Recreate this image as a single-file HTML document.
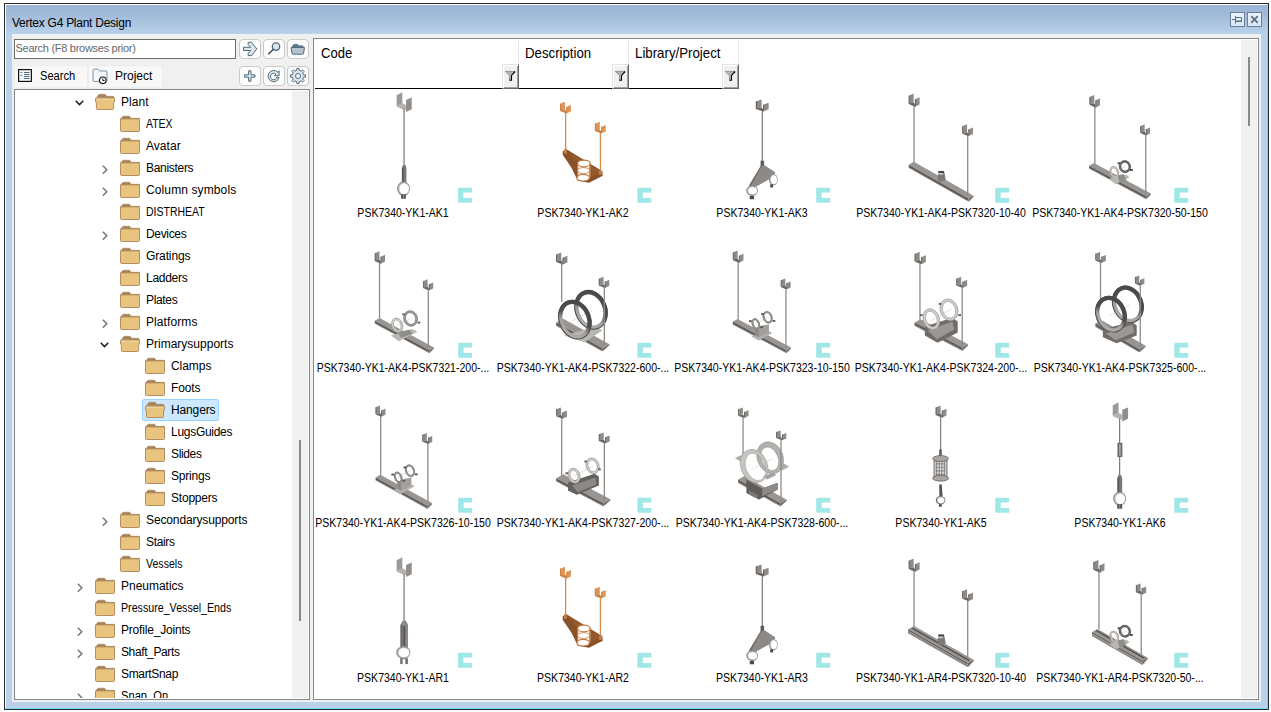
<!DOCTYPE html>
<html lang="en"><head><meta charset="utf-8"><title>Vertex G4 Plant Design</title>
<style>
*{box-sizing:border-box;margin:0;padding:0}
html,body{width:1271px;height:712px;background:#fff;overflow:hidden}
body{position:relative;font-family:"Liberation Sans",sans-serif;font-size:12px;color:#000}
.abs{position:absolute}
#win{left:4px;top:3px;width:1265px;height:707px;background:#b9d1ea;border:1px solid #2b2b2b;}
#winhi{left:5px;top:4px;width:1263px;height:705px;border:1px solid #fff;border-right-color:#6fdcf5;border-bottom-color:#6fdcf5}
#title{left:6px;top:5px;width:1261px;height:29px;background:linear-gradient(#9bb6d6 0%,#9fbad9 30%,#b9d1ea 100%)}
#ttext{left:12px;top:16px;font-size:12px;line-height:14px;white-space:nowrap;color:#000;letter-spacing:-0.1px}
#panel{left:12px;top:34px;width:1249px;height:668px;background:#f0f0f0}
.tbtn{top:12px;width:15px;height:15px;border:1px solid #6d7f93;background:linear-gradient(#e9f2fb,#d6e6f7)}
#search{left:14px;top:39px;width:222px;height:20px;background:#fff;border:1px solid #6b6b6b;}
#search span{position:absolute;left:0.5px;top:1.5px;font-size:11px;line-height:13px;color:#686868;white-space:nowrap}
.btn{width:22px;height:20px;background:#fdfdfd;border:1px solid #c9c9c9;border-radius:4px}
.btn svg{position:absolute;left:0;top:0}
.tab{top:65px;height:22px;background:#f8f8f8;border:1px solid #ececec;border-bottom:none}
.tab span{position:absolute;top:3px;font-size:12px;line-height:15px;white-space:nowrap}
#tree{left:14px;top:89px;width:296px;height:611px;background:#fff;border:1px solid #828790;overflow:hidden}
#tsb{left:292px;top:91px;width:16px;height:607px;background:#f0f0f0}
#tth{left:299px;top:440px;width:2px;height:181px;background:#8a8a8a}
.row{position:absolute;left:0;height:22px;white-space:nowrap}
.row .tx{position:absolute;top:4px;font-size:12px;line-height:15px;white-space:nowrap}
.sel{position:absolute;background:#cce8ff;border:1px solid #99d1ff;border-radius:2px}
#content{left:313px;top:38px;width:946px;height:662px;background:#fff;border:1px solid #828790;overflow:hidden}
#csb{left:1241px;top:40px;width:16px;height:658px;background:#f0f0f0}
#cth{left:1248px;top:57px;width:2px;height:69px;background:#8a8a8a}
.hd{top:44px;font-size:14.5px;line-height:18px;white-space:nowrap}
.hsep{top:40px;width:1px;height:48px;background:#e8e8e8}
.fbtn{top:64px;width:17px;height:25px;background:#f0f0f0;border:1px solid;border-color:#e3e3e3 #696969 #696969 #e3e3e3;box-shadow:inset 1px 1px 0 #fff,inset -1px -1px 0 #a0a0a0}
.lbl{position:absolute;font-size:12px;line-height:14px;white-space:nowrap;text-align:center;width:240px;transform:scaleX(0.877);transform-origin:50% 50%}
</style></head><body>
<div id="win" class="abs"></div><div id="winhi" class="abs"></div><div id="title" class="abs"></div>
<div id="ttext" class="abs fit" style="letter-spacing:-0.257px">Vertex G4 Plant Design</div>
<div class="abs tbtn" style="left:1230px"><svg width="13" height="13" viewBox="0 0 13 13" style="position:absolute;left:0;top:0"><path d="M1 6.5 H4.5" stroke="#5e6e7e" stroke-width="1" fill="none"/><path d="M4.5 3 V10.5" stroke="#5e6e7e" stroke-width="1" fill="none"/><path d="M4.5 4.5 H10.5 V8 H4.5" stroke="#5e6e7e" stroke-width="1" fill="none"/><path d="M4.5 8.5 H11" stroke="#5e6e7e" stroke-width="1" fill="none"/></svg></div><div class="abs tbtn" style="left:1247px"><svg width="13" height="13" viewBox="0 0 13 13" style="position:absolute;left:0;top:0"><path d="M3.3 3.2 L9.7 9.8 M9.7 3.2 L3.3 9.8" stroke="#5e6e7e" stroke-width="1.8" fill="none"/></svg></div>
<div id="panel" class="abs"></div>
<div id="search" class="abs"><span class="fit" style="letter-spacing:-0.282px">Search (F8 browses prior)</span></div>
<div class="abs btn" style="left:239px;top:39px"><svg width="20" height="18" viewBox="0 0 20 18" style="position:absolute;"><path d="M3.5 7.3 H10.6 L8.2 4.6 V2.3 H11.5 L16.8 8.9 L11.5 15.6 H8.2 V13.3 L10.6 10.5 H3.5Z" fill="#dde5ea" stroke="#4f6b7c" stroke-width="1" stroke-linejoin="miter"/></svg></div>
<div class="abs btn" style="left:239px;top:66px"><svg width="20" height="18" viewBox="0 0 20 18" style="position:absolute;"><path d="M8.6 3.8 H11 V7.8 H15 V10.2 H11 V14.2 H8.6 V10.2 H4.6 V7.8 H8.6Z" fill="#dde5ea" stroke="#4f6b7c" stroke-width="1"/></svg></div>
<div class="abs btn" style="left:263px;top:39px"><svg width="20" height="18" viewBox="0 0 20 18" style="position:absolute;"><circle cx="12" cy="6.6" r="3.7" fill="#dde5ea" stroke="#4f6b7c" stroke-width="1.3"/><path d="M9.4 9.2 L4.3 14.2" stroke="#3f4f5a" stroke-width="1.6" fill="none"/></svg></div>
<div class="abs btn" style="left:263px;top:66px"><svg width="20" height="18" viewBox="0 0 20 18" style="position:absolute;"><path transform="translate(0.5,0)" d="M13.2 5.2 A5.6 5.6 0 1 0 14.6 10.5 L12.2 10.2 A3.2 3.2 0 1 1 11.3 7.2 L9.8 8.7 H14.6 V3.8Z" fill="#dde5ea" stroke="#4f6b7c" stroke-width="1" stroke-linejoin="round"/></svg></div>
<div class="abs btn" style="left:287px;top:39px"><svg width="20" height="18" viewBox="0 0 20 18" style="position:absolute;"><path d="M4.5 6 L6 4.3 H9.5 L10.8 5.8 H15 V7 H4.5Z" fill="#60798a" stroke="#60798a" stroke-width="0.8"/><path d="M3 7.5 H16.5 L15.5 13.5 Q15.4 14.2 14.6 14.2 H4.9 Q4.1 14.2 4 13.5Z" fill="#b4c3cd" stroke="#4f6b7c" stroke-width="1"/></svg></div>
<div class="abs btn" style="left:287px;top:66px"><svg width="20" height="18" viewBox="0 0 20 18" style="position:absolute;"><path d="M8.86 1.49 L11.14 1.49 L11.19 3.43 L13.10 4.22 L14.51 2.88 L16.12 4.49 L14.78 5.90 L15.57 7.81 L17.51 7.86 L17.51 10.14 L15.57 10.19 L14.78 12.10 L16.12 13.51 L14.51 15.12 L13.10 13.78 L11.19 14.57 L11.14 16.51 L8.86 16.51 L8.81 14.57 L6.90 13.78 L5.49 15.12 L3.88 13.51 L5.22 12.10 L4.43 10.19 L2.49 10.14 L2.49 7.86 L4.43 7.81 L5.22 5.90 L3.88 4.49 L5.49 2.88 L6.90 4.22 L8.81 3.43Z" fill="#dde5ea" stroke="#4f6b7c" stroke-width="1" stroke-linejoin="round"/><circle cx="10" cy="9" r="2.5" fill="#fcfcfc" stroke="#4f6b7c" stroke-width="1"/></svg></div>
<div class="abs tab" style="left:14px;width:74px"><svg width="14" height="13" viewBox="0 0 14 13" style="position:absolute;left:3px;top:3px"><rect x="0.6" y="0.6" width="12.8" height="11.8" fill="#f4f6f8" stroke="#111" stroke-width="1.2"/><path d="M6 3.5 H11.5 M6 5.5 H11.5 M6 7.5 H11.5 M6 9.5 H11.5" stroke="#4f6b7c" stroke-width="1"/><path d="M2.5 3.5 H4.5 M2.5 6.5 H4.5" stroke="#6b8799" stroke-width="1"/></svg><span class="fit" style="left:25px;display:inline-block;transform-origin:0 50%;transform:scaleX(0.9256)">Search</span></div>
<div class="abs tab" style="left:88px;width:75px"><svg width="17" height="17" viewBox="0 0 17 17" style="position:absolute;left:3px;top:2px"><path d="M1 12.5 V2.5 Q1 1.2 2.2 1.2 H5.5 Q6.3 1.2 6.8 1.9 L7.6 3 H14 Q15 3 15 4 V12.5 Q15 13.4 14 13.4 H2 Q1 13.4 1 12.5Z" fill="#f3f5f7" stroke="#7f93a2" stroke-width="1"/><circle cx="10.8" cy="12.3" r="3.3" fill="#fff" stroke="#111" stroke-width="1.1"/><path d="M10.8 10.5 V12.5 H12.5" fill="none" stroke="#111" stroke-width="1"/></svg><span class="fit" style="left:26px;letter-spacing:-0.008px">Project</span></div>
<div id="tree" class="abs">
<div class="row" style="top:1px"><svg width="9" height="6" viewBox="0 0 9 6" style="position:absolute;left:60px;top:9px"><path d="M0.7 0.8 L4.5 4.6 L8.3 0.8" fill="none" stroke="#1e1e1e" stroke-width="1.5"/></svg><svg width="20" height="22" viewBox="0 0 20 22" style="position:absolute;left:80px;top:-1px"><path d="M1.5 7.5 L4 4.3 H10 L11.8 6.3 H18.5 L19.2 8 Z" fill="#a58357" stroke="#a58357" stroke-width="0.6"/><path d="M0.5 8.2 H19.5 L19.3 12 L18.6 13 V18.6 Q18.6 19.5 17.7 19.5 H2.3 Q1.4 19.5 1.4 18.6 V13 L0.7 12 Z" fill="#e9c47f" stroke="#b28e60" stroke-width="1"/><path d="M1.3 9.2 H18.7" stroke="#f6dea6" stroke-width="0.9" fill="none"/></svg><span class="tx" style="left:106px;letter-spacing:0.068px">Plant</span></div>
<div class="row" style="top:23px"><svg width="20" height="22" viewBox="0 0 20 22" style="position:absolute;left:105px;top:-1px"><path d="M0.5 6.8 L3.2 4.2 H9.5 L11.2 6.3 H19.5 V8 H0.5Z" fill="#a58357" stroke="#a58357" stroke-width="0.6"/><rect x="0.5" y="6.9" width="19" height="12.6" rx="1.2" fill="#e9c47f" stroke="#b28e60" stroke-width="1"/></svg><span class="tx" style="left:131px;display:inline-block;transform-origin:0 50%;transform:scaleX(0.8702)">ATEX</span></div>
<div class="row" style="top:45px"><svg width="20" height="22" viewBox="0 0 20 22" style="position:absolute;left:105px;top:-1px"><path d="M0.5 6.8 L3.2 4.2 H9.5 L11.2 6.3 H19.5 V8 H0.5Z" fill="#a58357" stroke="#a58357" stroke-width="0.6"/><rect x="0.5" y="6.9" width="19" height="12.6" rx="1.2" fill="#e9c47f" stroke="#b28e60" stroke-width="1"/></svg><span class="tx" style="left:131px;letter-spacing:0.039px">Avatar</span></div>
<div class="row" style="top:67px"><svg width="6" height="10" viewBox="0 0 6 10" style="position:absolute;left:87px;top:8px"><path d="M0.8 0.7 L4.8 4.7 L0.8 8.7" fill="none" stroke="#767676" stroke-width="1.5"/></svg><svg width="20" height="22" viewBox="0 0 20 22" style="position:absolute;left:105px;top:-1px"><path d="M0.5 6.8 L3.2 4.2 H9.5 L11.2 6.3 H19.5 V8 H0.5Z" fill="#a58357" stroke="#a58357" stroke-width="0.6"/><rect x="0.5" y="6.9" width="19" height="12.6" rx="1.2" fill="#e9c47f" stroke="#b28e60" stroke-width="1"/></svg><span class="tx" style="left:131px;letter-spacing:-0.303px">Banisters</span></div>
<div class="row" style="top:89px"><svg width="6" height="10" viewBox="0 0 6 10" style="position:absolute;left:87px;top:8px"><path d="M0.8 0.7 L4.8 4.7 L0.8 8.7" fill="none" stroke="#767676" stroke-width="1.5"/></svg><svg width="20" height="22" viewBox="0 0 20 22" style="position:absolute;left:105px;top:-1px"><path d="M0.5 6.8 L3.2 4.2 H9.5 L11.2 6.3 H19.5 V8 H0.5Z" fill="#a58357" stroke="#a58357" stroke-width="0.6"/><rect x="0.5" y="6.9" width="19" height="12.6" rx="1.2" fill="#e9c47f" stroke="#b28e60" stroke-width="1"/></svg><span class="tx" style="left:131px;letter-spacing:0.114px">Column symbols</span></div>
<div class="row" style="top:111px"><svg width="20" height="22" viewBox="0 0 20 22" style="position:absolute;left:105px;top:-1px"><path d="M0.5 6.8 L3.2 4.2 H9.5 L11.2 6.3 H19.5 V8 H0.5Z" fill="#a58357" stroke="#a58357" stroke-width="0.6"/><rect x="0.5" y="6.9" width="19" height="12.6" rx="1.2" fill="#e9c47f" stroke="#b28e60" stroke-width="1"/></svg><span class="tx" style="left:131px;display:inline-block;transform-origin:0 50%;transform:scaleX(0.8745)">DISTRHEAT</span></div>
<div class="row" style="top:133px"><svg width="6" height="10" viewBox="0 0 6 10" style="position:absolute;left:87px;top:8px"><path d="M0.8 0.7 L4.8 4.7 L0.8 8.7" fill="none" stroke="#767676" stroke-width="1.5"/></svg><svg width="20" height="22" viewBox="0 0 20 22" style="position:absolute;left:105px;top:-1px"><path d="M0.5 6.8 L3.2 4.2 H9.5 L11.2 6.3 H19.5 V8 H0.5Z" fill="#a58357" stroke="#a58357" stroke-width="0.6"/><rect x="0.5" y="6.9" width="19" height="12.6" rx="1.2" fill="#e9c47f" stroke="#b28e60" stroke-width="1"/></svg><span class="tx" style="left:131px;letter-spacing:-0.327px">Devices</span></div>
<div class="row" style="top:155px"><svg width="20" height="22" viewBox="0 0 20 22" style="position:absolute;left:105px;top:-1px"><path d="M0.5 6.8 L3.2 4.2 H9.5 L11.2 6.3 H19.5 V8 H0.5Z" fill="#a58357" stroke="#a58357" stroke-width="0.6"/><rect x="0.5" y="6.9" width="19" height="12.6" rx="1.2" fill="#e9c47f" stroke="#b28e60" stroke-width="1"/></svg><span class="tx" style="left:131px;letter-spacing:-0.120px">Gratings</span></div>
<div class="row" style="top:177px"><svg width="20" height="22" viewBox="0 0 20 22" style="position:absolute;left:105px;top:-1px"><path d="M0.5 6.8 L3.2 4.2 H9.5 L11.2 6.3 H19.5 V8 H0.5Z" fill="#a58357" stroke="#a58357" stroke-width="0.6"/><rect x="0.5" y="6.9" width="19" height="12.6" rx="1.2" fill="#e9c47f" stroke="#b28e60" stroke-width="1"/></svg><span class="tx" style="left:131px;letter-spacing:-0.282px">Ladders</span></div>
<div class="row" style="top:199px"><svg width="20" height="22" viewBox="0 0 20 22" style="position:absolute;left:105px;top:-1px"><path d="M0.5 6.8 L3.2 4.2 H9.5 L11.2 6.3 H19.5 V8 H0.5Z" fill="#a58357" stroke="#a58357" stroke-width="0.6"/><rect x="0.5" y="6.9" width="19" height="12.6" rx="1.2" fill="#e9c47f" stroke="#b28e60" stroke-width="1"/></svg><span class="tx" style="left:131px;letter-spacing:-0.343px">Plates</span></div>
<div class="row" style="top:221px"><svg width="6" height="10" viewBox="0 0 6 10" style="position:absolute;left:87px;top:8px"><path d="M0.8 0.7 L4.8 4.7 L0.8 8.7" fill="none" stroke="#767676" stroke-width="1.5"/></svg><svg width="20" height="22" viewBox="0 0 20 22" style="position:absolute;left:105px;top:-1px"><path d="M0.5 6.8 L3.2 4.2 H9.5 L11.2 6.3 H19.5 V8 H0.5Z" fill="#a58357" stroke="#a58357" stroke-width="0.6"/><rect x="0.5" y="6.9" width="19" height="12.6" rx="1.2" fill="#e9c47f" stroke="#b28e60" stroke-width="1"/></svg><span class="tx" style="left:131px;letter-spacing:0.090px">Platforms</span></div>
<div class="row" style="top:243px"><svg width="9" height="6" viewBox="0 0 9 6" style="position:absolute;left:85px;top:9px"><path d="M0.7 0.8 L4.5 4.6 L8.3 0.8" fill="none" stroke="#1e1e1e" stroke-width="1.5"/></svg><svg width="20" height="22" viewBox="0 0 20 22" style="position:absolute;left:105px;top:-1px"><path d="M1.5 7.5 L4 4.3 H10 L11.8 6.3 H18.5 L19.2 8 Z" fill="#a58357" stroke="#a58357" stroke-width="0.6"/><path d="M0.5 8.2 H19.5 L19.3 12 L18.6 13 V18.6 Q18.6 19.5 17.7 19.5 H2.3 Q1.4 19.5 1.4 18.6 V13 L0.7 12 Z" fill="#e9c47f" stroke="#b28e60" stroke-width="1"/><path d="M1.3 9.2 H18.7" stroke="#f6dea6" stroke-width="0.9" fill="none"/></svg><span class="tx" style="left:131px;letter-spacing:0.003px">Primarysupports</span></div>
<div class="row" style="top:265px"><svg width="20" height="22" viewBox="0 0 20 22" style="position:absolute;left:130px;top:-1px"><path d="M0.5 6.8 L3.2 4.2 H9.5 L11.2 6.3 H19.5 V8 H0.5Z" fill="#a58357" stroke="#a58357" stroke-width="0.6"/><rect x="0.5" y="6.9" width="19" height="12.6" rx="1.2" fill="#e9c47f" stroke="#b28e60" stroke-width="1"/></svg><span class="tx" style="left:156px;letter-spacing:-0.048px">Clamps</span></div>
<div class="row" style="top:287px"><svg width="20" height="22" viewBox="0 0 20 22" style="position:absolute;left:130px;top:-1px"><path d="M0.5 6.8 L3.2 4.2 H9.5 L11.2 6.3 H19.5 V8 H0.5Z" fill="#a58357" stroke="#a58357" stroke-width="0.6"/><rect x="0.5" y="6.9" width="19" height="12.6" rx="1.2" fill="#e9c47f" stroke="#b28e60" stroke-width="1"/></svg><span class="tx" style="left:156px;letter-spacing:-0.143px">Foots</span></div>
<div class="row" style="top:309px"><div class="sel" style="left:127px;top:0px;width:77px;height:22px"></div><svg width="20" height="22" viewBox="0 0 20 22" style="position:absolute;left:130px;top:-1px"><path d="M1.5 7.5 L4 4.3 H10 L11.8 6.3 H18.5 L19.2 8 Z" fill="#a58357" stroke="#a58357" stroke-width="0.6"/><path d="M0.5 8.2 H19.5 L19.3 12 L18.6 13 V18.6 Q18.6 19.5 17.7 19.5 H2.3 Q1.4 19.5 1.4 18.6 V13 L0.7 12 Z" fill="#e9c47f" stroke="#b28e60" stroke-width="1"/><path d="M1.3 9.2 H18.7" stroke="#f6dea6" stroke-width="0.9" fill="none"/></svg><span class="tx" style="left:156px;letter-spacing:-0.137px">Hangers</span></div>
<div class="row" style="top:331px"><svg width="20" height="22" viewBox="0 0 20 22" style="position:absolute;left:130px;top:-1px"><path d="M0.5 6.8 L3.2 4.2 H9.5 L11.2 6.3 H19.5 V8 H0.5Z" fill="#a58357" stroke="#a58357" stroke-width="0.6"/><rect x="0.5" y="6.9" width="19" height="12.6" rx="1.2" fill="#e9c47f" stroke="#b28e60" stroke-width="1"/></svg><span class="tx" style="left:156px;letter-spacing:-0.285px">LugsGuides</span></div>
<div class="row" style="top:353px"><svg width="20" height="22" viewBox="0 0 20 22" style="position:absolute;left:130px;top:-1px"><path d="M0.5 6.8 L3.2 4.2 H9.5 L11.2 6.3 H19.5 V8 H0.5Z" fill="#a58357" stroke="#a58357" stroke-width="0.6"/><rect x="0.5" y="6.9" width="19" height="12.6" rx="1.2" fill="#e9c47f" stroke="#b28e60" stroke-width="1"/></svg><span class="tx" style="left:156px;letter-spacing:-0.348px">Slides</span></div>
<div class="row" style="top:375px"><svg width="20" height="22" viewBox="0 0 20 22" style="position:absolute;left:130px;top:-1px"><path d="M0.5 6.8 L3.2 4.2 H9.5 L11.2 6.3 H19.5 V8 H0.5Z" fill="#a58357" stroke="#a58357" stroke-width="0.6"/><rect x="0.5" y="6.9" width="19" height="12.6" rx="1.2" fill="#e9c47f" stroke="#b28e60" stroke-width="1"/></svg><span class="tx" style="left:156px;letter-spacing:-0.184px">Springs</span></div>
<div class="row" style="top:397px"><svg width="20" height="22" viewBox="0 0 20 22" style="position:absolute;left:130px;top:-1px"><path d="M0.5 6.8 L3.2 4.2 H9.5 L11.2 6.3 H19.5 V8 H0.5Z" fill="#a58357" stroke="#a58357" stroke-width="0.6"/><rect x="0.5" y="6.9" width="19" height="12.6" rx="1.2" fill="#e9c47f" stroke="#b28e60" stroke-width="1"/></svg><span class="tx" style="left:156px;letter-spacing:-0.204px">Stoppers</span></div>
<div class="row" style="top:419px"><svg width="6" height="10" viewBox="0 0 6 10" style="position:absolute;left:87px;top:8px"><path d="M0.8 0.7 L4.8 4.7 L0.8 8.7" fill="none" stroke="#767676" stroke-width="1.5"/></svg><svg width="20" height="22" viewBox="0 0 20 22" style="position:absolute;left:105px;top:-1px"><path d="M0.5 6.8 L3.2 4.2 H9.5 L11.2 6.3 H19.5 V8 H0.5Z" fill="#a58357" stroke="#a58357" stroke-width="0.6"/><rect x="0.5" y="6.9" width="19" height="12.6" rx="1.2" fill="#e9c47f" stroke="#b28e60" stroke-width="1"/></svg><span class="tx" style="left:131px;letter-spacing:-0.124px">Secondarysupports</span></div>
<div class="row" style="top:441px"><svg width="20" height="22" viewBox="0 0 20 22" style="position:absolute;left:105px;top:-1px"><path d="M0.5 6.8 L3.2 4.2 H9.5 L11.2 6.3 H19.5 V8 H0.5Z" fill="#a58357" stroke="#a58357" stroke-width="0.6"/><rect x="0.5" y="6.9" width="19" height="12.6" rx="1.2" fill="#e9c47f" stroke="#b28e60" stroke-width="1"/></svg><span class="tx" style="left:131px;letter-spacing:-0.348px">Stairs</span></div>
<div class="row" style="top:463px"><svg width="20" height="22" viewBox="0 0 20 22" style="position:absolute;left:105px;top:-1px"><path d="M0.5 6.8 L3.2 4.2 H9.5 L11.2 6.3 H19.5 V8 H0.5Z" fill="#a58357" stroke="#a58357" stroke-width="0.6"/><rect x="0.5" y="6.9" width="19" height="12.6" rx="1.2" fill="#e9c47f" stroke="#b28e60" stroke-width="1"/></svg><span class="tx" style="left:131px;display:inline-block;transform-origin:0 50%;transform:scaleX(0.8825)">Vessels</span></div>
<div class="row" style="top:485px"><svg width="6" height="10" viewBox="0 0 6 10" style="position:absolute;left:62px;top:8px"><path d="M0.8 0.7 L4.8 4.7 L0.8 8.7" fill="none" stroke="#767676" stroke-width="1.5"/></svg><svg width="20" height="22" viewBox="0 0 20 22" style="position:absolute;left:80px;top:-1px"><path d="M0.5 6.8 L3.2 4.2 H9.5 L11.2 6.3 H19.5 V8 H0.5Z" fill="#a58357" stroke="#a58357" stroke-width="0.6"/><rect x="0.5" y="6.9" width="19" height="12.6" rx="1.2" fill="#e9c47f" stroke="#b28e60" stroke-width="1"/></svg><span class="tx" style="left:106px;letter-spacing:-0.020px">Pneumatics</span></div>
<div class="row" style="top:507px"><svg width="20" height="22" viewBox="0 0 20 22" style="position:absolute;left:80px;top:-1px"><path d="M0.5 6.8 L3.2 4.2 H9.5 L11.2 6.3 H19.5 V8 H0.5Z" fill="#a58357" stroke="#a58357" stroke-width="0.6"/><rect x="0.5" y="6.9" width="19" height="12.6" rx="1.2" fill="#e9c47f" stroke="#b28e60" stroke-width="1"/></svg><span class="tx" style="left:106px;display:inline-block;transform-origin:0 50%;transform:scaleX(0.8890)">Pressure_Vessel_Ends</span></div>
<div class="row" style="top:529px"><svg width="6" height="10" viewBox="0 0 6 10" style="position:absolute;left:62px;top:8px"><path d="M0.8 0.7 L4.8 4.7 L0.8 8.7" fill="none" stroke="#767676" stroke-width="1.5"/></svg><svg width="20" height="22" viewBox="0 0 20 22" style="position:absolute;left:80px;top:-1px"><path d="M0.5 6.8 L3.2 4.2 H9.5 L11.2 6.3 H19.5 V8 H0.5Z" fill="#a58357" stroke="#a58357" stroke-width="0.6"/><rect x="0.5" y="6.9" width="19" height="12.6" rx="1.2" fill="#e9c47f" stroke="#b28e60" stroke-width="1"/></svg><span class="tx" style="left:106px;letter-spacing:-0.189px">Profile_Joints</span></div>
<div class="row" style="top:551px"><svg width="6" height="10" viewBox="0 0 6 10" style="position:absolute;left:62px;top:8px"><path d="M0.8 0.7 L4.8 4.7 L0.8 8.7" fill="none" stroke="#767676" stroke-width="1.5"/></svg><svg width="20" height="22" viewBox="0 0 20 22" style="position:absolute;left:80px;top:-1px"><path d="M0.5 6.8 L3.2 4.2 H9.5 L11.2 6.3 H19.5 V8 H0.5Z" fill="#a58357" stroke="#a58357" stroke-width="0.6"/><rect x="0.5" y="6.9" width="19" height="12.6" rx="1.2" fill="#e9c47f" stroke="#b28e60" stroke-width="1"/></svg><span class="tx" style="left:106px;letter-spacing:-0.382px">Shaft_Parts</span></div>
<div class="row" style="top:573px"><svg width="20" height="22" viewBox="0 0 20 22" style="position:absolute;left:80px;top:-1px"><path d="M0.5 6.8 L3.2 4.2 H9.5 L11.2 6.3 H19.5 V8 H0.5Z" fill="#a58357" stroke="#a58357" stroke-width="0.6"/><rect x="0.5" y="6.9" width="19" height="12.6" rx="1.2" fill="#e9c47f" stroke="#b28e60" stroke-width="1"/></svg><span class="tx" style="left:106px;letter-spacing:-0.337px">SmartSnap</span></div>
<div class="row" style="top:595px"><svg width="6" height="10" viewBox="0 0 6 10" style="position:absolute;left:62px;top:8px"><path d="M0.8 0.7 L4.8 4.7 L0.8 8.7" fill="none" stroke="#767676" stroke-width="1.5"/></svg><svg width="20" height="22" viewBox="0 0 20 22" style="position:absolute;left:80px;top:-1px"><path d="M0.5 6.8 L3.2 4.2 H9.5 L11.2 6.3 H19.5 V8 H0.5Z" fill="#a58357" stroke="#a58357" stroke-width="0.6"/><rect x="0.5" y="6.9" width="19" height="12.6" rx="1.2" fill="#e9c47f" stroke="#b28e60" stroke-width="1"/></svg><span class="tx" style="left:106px;display:inline-block;transform-origin:0 50%;transform:scaleX(0.9287)">Snap_On</span></div>
<div class="abs" style="left:0;top:608px;width:294px;height:1px;background:#fff"></div>
</div>
<div id="tsb" class="abs"></div><div id="tth" class="abs"></div>
<div id="content" class="abs"></div>
<div id="csb" class="abs"></div><div id="cth" class="abs"></div>
<div class="abs hd fit" style="left:321px;display:inline-block;transform-origin:0 50%;transform:scaleX(0.8999)">Code</div><div class="abs hd fit" style="left:525px;display:inline-block;transform-origin:0 50%;transform:scaleX(0.9127)">Description</div><div class="abs hd fit" style="left:635px;display:inline-block;transform-origin:0 50%;transform:scaleX(0.9146)">Library/Project</div>
<div class="abs hsep" style="left:518px"></div>
<div class="abs hsep" style="left:628px"></div>
<div class="abs hsep" style="left:738px"></div>
<div class="abs" style="left:315px;top:88px;width:424px;height:1px;background:#000"></div>
<div class="abs fbtn" style="left:502px"><svg width="17" height="25" viewBox="0 0 17 25" style="position:absolute;left:-1px;top:-1px"><path d="M3.2 7.4 H13 L9.5 11.3 V16 H7.5 V11.3Z" fill="#b4b4b4" stroke="none"/><path d="M13 7.4 H3.2 L7.5 11.6 V16" fill="none" stroke="#858585" stroke-width="0.8"/><path d="M13.2 7.5 L9.5 11.4 V16.3 H7.2" fill="none" stroke="#000" stroke-width="1.1"/></svg></div>
<div class="abs fbtn" style="left:612px"><svg width="17" height="25" viewBox="0 0 17 25" style="position:absolute;left:-1px;top:-1px"><path d="M3.2 7.4 H13 L9.5 11.3 V16 H7.5 V11.3Z" fill="#b4b4b4" stroke="none"/><path d="M13 7.4 H3.2 L7.5 11.6 V16" fill="none" stroke="#858585" stroke-width="0.8"/><path d="M13.2 7.5 L9.5 11.4 V16.3 H7.2" fill="none" stroke="#000" stroke-width="1.1"/></svg></div>
<div class="abs fbtn" style="left:722px"><svg width="17" height="25" viewBox="0 0 17 25" style="position:absolute;left:-1px;top:-1px"><path d="M3.2 7.4 H13 L9.5 11.3 V16 H7.5 V11.3Z" fill="#b4b4b4" stroke="none"/><path d="M13 7.4 H3.2 L7.5 11.6 V16" fill="none" stroke="#858585" stroke-width="0.8"/><path d="M13.2 7.5 L9.5 11.4 V16.3 H7.2" fill="none" stroke="#000" stroke-width="1.1"/></svg></div>
<svg width="926" height="610" viewBox="314 89 926 610" style="position:absolute;left:314px;top:89px;overflow:hidden">
<defs><linearGradient id="gDark" x1="0" y1="1" x2="1" y2="0"><stop offset="0" stop-color="#b4b2af"/><stop offset="0.36" stop-color="#a3a19e"/><stop offset="0.52" stop-color="#504e4c"/><stop offset="1" stop-color="#4a4846"/></linearGradient><linearGradient id="gMid" x1="0" y1="1" x2="1" y2="0"><stop offset="0" stop-color="#d2d0cd"/><stop offset="0.42" stop-color="#c4c2bf"/><stop offset="0.6" stop-color="#7e7b78"/><stop offset="1" stop-color="#777472"/></linearGradient><linearGradient id="gLight" x1="0" y1="1" x2="1" y2="0"><stop offset="0" stop-color="#e2e0de"/><stop offset="0.5" stop-color="#d0cecb"/><stop offset="0.7" stop-color="#a9a6a3"/><stop offset="1" stop-color="#a29f9c"/></linearGradient></defs>
<g transform="translate(340,88) scale(0.19656)">
<polygon points="286.46,94.1 317.029,76.59 335.971,87.92 335.971,110.58 324.19,110.58" fill="#b6b2af"/><polygon points="288,37.45 317.029,22 317.029,77.002 288,92.555" fill="#9e9a97"/><polygon points="335.971,61.037 365,48.78 365,107.49 335.971,122.631" fill="#928e8b"/><line x1="326" y1="105" x2="326" y2="400" stroke="#8a8683" stroke-width="7"/><polygon points="320,392 334,392 338,410 338,482 315,482 315,410" fill="#7b7876"/><rect x="315" y="405" width="9" height="77" fill="#5a5856"/><ellipse cx="323" cy="512" rx="33" ry="36" fill="#8f8d8a" stroke="none" stroke-width="0"/><ellipse cx="324" cy="512" rx="27.6" ry="30.6" fill="#cfcdca" stroke="none" stroke-width="0"/><ellipse cx="327" cy="513" rx="24" ry="27" fill="#fff" stroke="none" stroke-width="0"/><rect x="311" y="541" width="24" height="22" fill="#4c4a48"/><rect x="319" y="541" width="8" height="22" fill="#8a8885"/>
<path d="M606 508 h65 v24 h-43 v27 h43 v25 h-65 q-6 0 -6 -6 v-64 q0 -6 6 -6z" fill="#a0e7e7"/>
</g>
<g transform="translate(510,88) scale(0.19656)">
<polygon points="255,112 279.86,109.6 286.405,118 286.405,130 255,116.8" fill="#c98248"/><polygon points="255,79.84 279.86,70 279.86,110.38 255,113.2" fill="#de9455"/><polygon points="286.405,96.16 310,86.38 310,119.08 286.405,130" fill="#de9455"/><polygon points="255,79.84 258.85,78.4 258.85,112.9 255,113.2" fill="#c47a40"/><polygon points="286.405,96.16 290.2,94.6 290.2,128.2 286.405,130" fill="#c47a40"/><line x1="283" y1="128" x2="283" y2="325" stroke="#d48a4c" stroke-width="6.5"/><polygon points="432,214 456.86,211.6 463.405,220 463.405,232 432,218.8" fill="#c98248"/><polygon points="432,181.84 456.86,172 456.86,212.38 432,215.2" fill="#de9455"/><polygon points="463.405,198.16 487,188.38 487,221.08 463.405,232" fill="#de9455"/><polygon points="432,181.84 435.85,180.4 435.85,214.9 432,215.2" fill="#c47a40"/><polygon points="463.405,198.16 467.2,196.6 467.2,230.2 463.405,232" fill="#c47a40"/><polygon points="268,322 292,314 470,424 472,446 402,482 345,472 312,405 268,340" fill="#8a5028"/><polygon points="292,318 466,428 420,448 330,365" fill="#96592d"/><rect x="344" y="384" width="64" height="72" fill="#fff"/><ellipse cx="372" cy="456" rx="32" ry="17" fill="#fff" stroke="#c47a40" stroke-width="6"/><ellipse cx="376" cy="384" rx="32" ry="17" fill="#fff" stroke="#c47a40" stroke-width="6"/><ellipse cx="374" cy="420" rx="32" ry="15" fill="none" stroke="#c47a40" stroke-width="4"/><rect x="341" y="384" width="6" height="72" fill="#c47a40"/><rect x="403" y="384" width="6" height="72" fill="#c47a40"/><line x1="460" y1="230" x2="460" y2="432" stroke="#d48a4c" stroke-width="6.5"/><rect x="452" y="420" width="16" height="22" fill="#c47a40"/><rect x="274" y="312" width="16" height="22" fill="#c47a40"/>
<path d="M654 508 h65 v24 h-43 v27 h43 v25 h-65 q-6 0 -6 -6 v-64 q0 -6 6 -6z" fill="#a0e7e7"/>
</g>
<g transform="translate(690,88) scale(0.19656)">
<polygon points="335,101.4 364.38,98.92 372.115,107.6 372.115,120 335,106.36" fill="#6a6765"/><polygon points="335,68.168 364.38,58 364.38,99.726 335,102.64" fill="#8d8a87"/><polygon points="372.115,85.032 400,74.926 400,108.716 372.115,120" fill="#8d8a87"/><polygon points="335,68.168 339.55,66.68 339.55,102.33 335,102.64" fill="#5f5c5a"/><polygon points="372.115,85.032 376.6,83.42 376.6,118.14 372.115,120" fill="#5f5c5a"/><line x1="368" y1="115" x2="368" y2="378" stroke="#8a8683" stroke-width="7"/><rect x="359" y="370" width="18" height="32" fill="#5f5d5b"/><polygon points="360,397 380,393 433,428 427,452 335,502 300,497" fill="#8c8986"/><polygon points="360,397 366,396 310,498 300,497" fill="#6f6c6a"/><ellipse cx="424" cy="466" rx="22" ry="29" fill="#8f8d8a" stroke="none" stroke-width="0"/><ellipse cx="425" cy="466" rx="17.8" ry="24.8" fill="#cfcdca" stroke="none" stroke-width="0"/><ellipse cx="427" cy="467" rx="15" ry="22" fill="#fff" stroke="none" stroke-width="0"/><rect x="408" y="490" width="15" height="16" fill="#4c4a48"/><ellipse cx="316" cy="522" rx="30" ry="26" fill="#8f8d8a" stroke="none" stroke-width="0"/><ellipse cx="317" cy="522" rx="25.2" ry="21.2" fill="#cfcdca" stroke="none" stroke-width="0"/><ellipse cx="319" cy="523" rx="22" ry="18" fill="#fff" stroke="none" stroke-width="0"/><rect x="304" y="548" width="22" height="18" fill="#4c4a48"/>
<path d="M648 508 h65 v24 h-43 v27 h43 v25 h-65 q-6 0 -6 -6 v-64 q0 -6 6 -6z" fill="#a0e7e7"/>
</g>
<g transform="translate(860,88) scale(0.19656)">
<polygon points="248,75.6 272.86,72.88 279.405,82.4 279.405,96 248,81.04" fill="#6a6765"/><polygon points="248,39.152 272.86,28 272.86,73.764 248,76.96" fill="#8d8a87"/><polygon points="279.405,57.648 303,46.564 303,83.624 279.405,96" fill="#8d8a87"/><polygon points="248,39.152 251.85,37.52 251.85,76.62 248,76.96" fill="#5f5c5a"/><polygon points="279.405,57.648 283.2,55.88 283.2,93.96 279.405,96" fill="#5f5c5a"/><line x1="275" y1="92" x2="275" y2="378" stroke="#8d8986" stroke-width="6.5"/><polygon points="520,227 544.86,224.6 551.405,233 551.405,245 520,231.8" fill="#6a6765"/><polygon points="520,194.84 544.86,185 544.86,225.38 520,228.2" fill="#8d8a87"/><polygon points="551.405,211.16 575,201.38 575,234.08 551.405,245" fill="#8d8a87"/><polygon points="520,194.84 523.85,193.4 523.85,227.9 520,228.2" fill="#5f5c5a"/><polygon points="551.405,211.16 555.2,209.6 555.2,243.2 551.405,245" fill="#5f5c5a"/><polygon points="248,390 274,375.7 578,547.7 552,562" fill="#989592"/><polygon points="248,390 552,562 552,578 248,406" fill="#5c5957"/><polygon points="248,401.52 552,573.52 552,578 248,406" fill="#9c9996"/><polygon points="552,562 578,547.7 578,553.3 556,574.8 578,563.7 552,578" fill="#6f6c6a"/><polygon points="395,440 430,432 436,468 400,478" fill="#7b7876"/><rect x="398" y="422" width="30" height="12" fill="#4c4a48"/><rect x="404" y="434" width="18" height="8" fill="#c9c7c4"/><line x1="548" y1="243" x2="548" y2="545" stroke="#8d8986" stroke-width="6.5"/>
<path d="M694 508 h65 v24 h-43 v27 h43 v25 h-65 q-6 0 -6 -6 v-64 q0 -6 6 -6z" fill="#a0e7e7"/>
</g>
<g transform="translate(1040,88) scale(0.19656)">
<polygon points="252,80.5 275.956,77.9 282.263,87 282.263,100 252,85.7" fill="#6a6765"/><polygon points="252,45.66 275.956,35 275.956,78.745 252,81.8" fill="#8d8a87"/><polygon points="282.263,63.34 305,52.745 305,88.17 282.263,100" fill="#8d8a87"/><polygon points="252,45.66 255.71,44.1 255.71,81.475 252,81.8" fill="#5f5c5a"/><polygon points="282.263,63.34 285.92,61.65 285.92,98.05 282.263,100" fill="#5f5c5a"/><line x1="279" y1="96" x2="279" y2="388" stroke="#8d8986" stroke-width="6.5"/><polygon points="510,224.9 532.6,222.62 538.55,230.6 538.55,242 510,229.46" fill="#6a6765"/><polygon points="510,194.348 532.6,185 532.6,223.361 510,226.04" fill="#8d8a87"/><polygon points="538.55,209.852 560,200.561 560,231.626 538.55,242" fill="#8d8a87"/><polygon points="510,194.348 513.5,192.98 513.5,225.755 510,226.04" fill="#5f5c5a"/><polygon points="538.55,209.852 542,208.37 542,240.29 538.55,242" fill="#5f5c5a"/><polygon points="250,395 274,381.8 564,536.8 540,550" fill="#989592"/><polygon points="250,395 540,550 540,565 250,410" fill="#5c5957"/><polygon points="250,405.8 540,560.8 540,565 250,410" fill="#9c9996"/><polygon points="540,550 564,536.8 564,542.05 544,562 564,551.8 540,565" fill="#6f6c6a"/><ellipse cx="432" cy="400" rx="24.5" ry="26.5" fill="#fff" stroke="#6f6c6a" stroke-width="11" transform="rotate(-20 432 400)"/><ellipse cx="432" cy="400" rx="28.8" ry="30.8" fill="none" stroke="#4a4846" stroke-width="2.6" transform="rotate(-20 432 400)"/><ellipse cx="432" cy="400" rx="20.2" ry="22.2" fill="none" stroke="#4a4846" stroke-width="2.2" transform="rotate(-20 432 400)"/><rect x="395" y="378" width="12" height="10" fill="#4c4a48"/><rect x="458" y="412" width="14" height="10" fill="#4c4a48"/><line x1="385" y1="428" x2="440" y2="395" stroke="#b0b0b0" stroke-width="2"/><ellipse cx="378" cy="428" rx="18" ry="26" fill="none" stroke="#d2d0cd" stroke-width="10" transform="rotate(-20 378 428)"/><ellipse cx="378" cy="428" rx="21.8" ry="29.8" fill="none" stroke="#8a8784" stroke-width="2.6" transform="rotate(-20 378 428)"/><ellipse cx="378" cy="428" rx="14.2" ry="22.2" fill="none" stroke="#8a8784" stroke-width="2.2" transform="rotate(-20 378 428)"/><polygon points="350,462 440,440 455,455 385,490" fill="#b9b7b4"/><polygon points="395,445 425,438 440,470 405,480" fill="#8f8d8a"/><line x1="538" y1="240" x2="538" y2="535" stroke="#8d8986" stroke-width="6.5"/>
<path d="M689 508 h65 v24 h-43 v27 h43 v25 h-65 q-6 0 -6 -6 v-64 q0 -6 6 -6z" fill="#a0e7e7"/>
</g>
<g transform="translate(330,243) scale(0.19656)">
<polygon points="228,86.8 251.504,84.24 257.692,93.2 257.692,106 228,91.92" fill="#6a6765"/><polygon points="228,52.496 251.504,42 251.504,85.072 228,88.08" fill="#8d8a87"/><polygon points="257.692,69.904 280,59.472 280,94.352 257.692,106" fill="#8d8a87"/><polygon points="228,52.496 231.64,50.96 231.64,87.76 228,88.08" fill="#5f5c5a"/><polygon points="257.692,69.904 261.28,68.24 261.28,104.08 257.692,106" fill="#5f5c5a"/><line x1="252" y1="102" x2="252" y2="388" stroke="#8d8986" stroke-width="6.5"/><polygon points="473,224.9 496.504,222.62 502.692,230.6 502.692,242 473,229.46" fill="#6a6765"/><polygon points="473,194.348 496.504,185 496.504,223.361 473,226.04" fill="#8d8a87"/><polygon points="502.692,209.852 525,200.561 525,231.626 502.692,242" fill="#8d8a87"/><polygon points="473,194.348 476.64,192.98 476.64,225.755 473,226.04" fill="#5f5c5a"/><polygon points="502.692,209.852 506.28,208.37 506.28,240.29 502.692,242" fill="#5f5c5a"/><polygon points="228,395 252,381.8 529,531.8 505,545" fill="#989592"/><polygon points="228,395 505,545 505,560 228,410" fill="#5c5957"/><polygon points="228,405.8 505,555.8 505,560 228,410" fill="#9c9996"/><polygon points="505,545 529,531.8 529,537.05 509,557 529,546.8 505,560" fill="#6f6c6a"/><ellipse cx="410" cy="384" rx="30" ry="35" fill="#fff" stroke="#a29f9c" stroke-width="12" transform="rotate(-20 410 384)"/><ellipse cx="410" cy="384" rx="34.8" ry="39.8" fill="none" stroke="#6a6765" stroke-width="2.6" transform="rotate(-20 410 384)"/><ellipse cx="410" cy="384" rx="25.2" ry="30.2" fill="none" stroke="#6a6765" stroke-width="2.2" transform="rotate(-20 410 384)"/><rect x="368" y="358" width="14" height="10" fill="#6b6967"/><rect x="445" y="400" width="14" height="10" fill="#6b6967"/><line x1="345" y1="420" x2="420" y2="380" stroke="#b0b0b0" stroke-width="2"/><ellipse cx="342" cy="418" rx="23" ry="32" fill="none" stroke="#d2d0cd" stroke-width="12" transform="rotate(-20 342 418)"/><ellipse cx="342" cy="418" rx="27.8" ry="36.8" fill="none" stroke="#8a8784" stroke-width="2.6" transform="rotate(-20 342 418)"/><ellipse cx="342" cy="418" rx="18.2" ry="27.2" fill="none" stroke="#8a8784" stroke-width="2.2" transform="rotate(-20 342 418)"/><polygon points="310,470 420,438 445,452 350,500" fill="#b9b7b4"/><polygon points="345,455 405,440 420,462 362,482" fill="#8f8d8a"/><line x1="500" y1="240" x2="500" y2="528" stroke="#8d8986" stroke-width="6.5"/>
<path d="M658 508 h65 v24 h-43 v27 h43 v25 h-65 q-6 0 -6 -6 v-64 q0 -6 6 -6z" fill="#a0e7e7"/>
</g>
<g transform="translate(510,243) scale(0.19656)">
<polygon points="235,91.4 260.764,88.92 267.547,97.6 267.547,110 235,96.36" fill="#6a6765"/><polygon points="235,58.168 260.764,48 260.764,89.726 235,92.64" fill="#8d8a87"/><polygon points="267.547,75.032 292,64.926 292,98.716 267.547,110" fill="#8d8a87"/><polygon points="235,58.168 238.99,56.68 238.99,92.33 235,92.64" fill="#5f5c5a"/><polygon points="267.547,75.032 271.48,73.42 271.48,108.14 267.547,110" fill="#5f5c5a"/><line x1="263" y1="106" x2="263" y2="300" stroke="#8d8986" stroke-width="6.5"/><polygon points="452,211.9 475.956,209.62 482.263,217.6 482.263,229 452,216.46" fill="#6a6765"/><polygon points="452,181.348 475.956,172 475.956,210.361 452,213.04" fill="#8d8a87"/><polygon points="482.263,196.852 505,187.561 505,218.626 482.263,229" fill="#8d8a87"/><polygon points="452,181.348 455.71,179.98 455.71,212.755 452,213.04" fill="#5f5c5a"/><polygon points="482.263,196.852 485.92,195.37 485.92,227.29 482.263,229" fill="#5f5c5a"/><polygon points="235,405 271,385.2 506,515.2 470,535" fill="#989592"/><polygon points="235,405 470,535 470,551 235,421" fill="#5c5957"/><polygon points="235,416.52 470,546.52 470,551 235,421" fill="#9c9996"/><polygon points="470,535 506,515.2 506,520.8 474,547.8 506,531.2 470,551" fill="#6f6c6a"/><polygon points="275,470 440,425 470,445 380,505" fill="#b9b7b4"/><ellipse cx="412" cy="340" rx="71" ry="93" fill="#fff" stroke="url(#gDark)" stroke-width="22" transform="rotate(-22 412 340)"/><ellipse cx="412" cy="340" rx="79.5" ry="101.5" fill="none" stroke="#4a4846" stroke-width="5" transform="rotate(-22 412 340)"/><line x1="315" y1="395" x2="420" y2="345" stroke="#b0b0b0" stroke-width="2"/><ellipse cx="330" cy="390" rx="71" ry="93" fill="none" stroke="url(#gDark)" stroke-width="22" transform="rotate(-22 330 390)"/><ellipse cx="330" cy="390" rx="79.5" ry="101.5" fill="none" stroke="#4a4846" stroke-width="5" transform="rotate(-22 330 390)"/><line x1="480" y1="226" x2="480" y2="520" stroke="#8d8986" stroke-width="6.5"/>
<path d="M654 508 h65 v24 h-43 v27 h43 v25 h-65 q-6 0 -6 -6 v-64 q0 -6 6 -6z" fill="#a0e7e7"/>
</g>
<g transform="translate(690,243) scale(0.19656)">
<polygon points="218,82.1 242.408,79.58 248.834,88.4 248.834,101 218,87.14" fill="#6a6765"/><polygon points="218,48.332 242.408,38 242.408,80.399 218,83.36" fill="#8d8a87"/><polygon points="248.834,65.468 272,55.199 272,89.534 248.834,101" fill="#8d8a87"/><polygon points="218,48.332 221.78,46.82 221.78,83.045 218,83.36" fill="#5f5c5a"/><polygon points="248.834,65.468 252.56,63.83 252.56,99.11 248.834,101" fill="#5f5c5a"/><line x1="245" y1="98" x2="245" y2="390" stroke="#8d8986" stroke-width="6.5"/><polygon points="462,219.9 484.6,217.62 490.55,225.6 490.55,237 462,224.46" fill="#6a6765"/><polygon points="462,189.348 484.6,180 484.6,218.361 462,221.04" fill="#8d8a87"/><polygon points="490.55,204.852 512,195.561 512,226.626 490.55,237" fill="#8d8a87"/><polygon points="462,189.348 465.5,187.98 465.5,220.755 462,221.04" fill="#5f5c5a"/><polygon points="490.55,204.852 494,203.37 494,235.29 490.55,237" fill="#5f5c5a"/><polygon points="218,400 242,386.8 514,531.8 490,545" fill="#989592"/><polygon points="218,400 490,545 490,560 218,415" fill="#5c5957"/><polygon points="218,410.8 490,555.8 490,560 218,415" fill="#9c9996"/><polygon points="490,545 514,531.8 514,537.05 494,557 514,546.8 490,560" fill="#6f6c6a"/><polygon points="311,474 399,449 420,456 349,496" fill="#b3b0ad"/><polygon points="332,434 369,419 402,414 402,455 349,479 332,470" fill="#a29f9c"/><polygon points="332,434 349,442 349,479 332,470" fill="#8a8784"/><ellipse cx="395" cy="378" rx="19.5" ry="27.5" fill="#fff" stroke="#a29f9c" stroke-width="9" transform="rotate(-20 395 378)"/><ellipse cx="395" cy="378" rx="22.8" ry="30.8" fill="none" stroke="#6a6765" stroke-width="2.6" transform="rotate(-20 395 378)"/><ellipse cx="395" cy="378" rx="16.2" ry="24.2" fill="none" stroke="#6a6765" stroke-width="2.2" transform="rotate(-20 395 378)"/><rect x="362" y="357" width="14" height="9" fill="#55524f"/><rect x="420" y="392" width="14" height="9" fill="#55524f"/><line x1="338" y1="410" x2="395" y2="378" stroke="#b0b0b0" stroke-width="2"/><ellipse cx="335" cy="412" rx="15.5" ry="25.5" fill="none" stroke="#a29f9c" stroke-width="9" transform="rotate(-20 335 412)"/><ellipse cx="335" cy="412" rx="18.8" ry="28.8" fill="none" stroke="#6a6765" stroke-width="2.6" transform="rotate(-20 335 412)"/><ellipse cx="335" cy="412" rx="12.2" ry="22.2" fill="none" stroke="#6a6765" stroke-width="2.2" transform="rotate(-20 335 412)"/><rect x="300" y="393" width="14" height="9" fill="#55524f"/><rect x="357" y="424" width="14" height="9" fill="#55524f"/><line x1="488" y1="235" x2="488" y2="532" stroke="#8d8986" stroke-width="6.5"/>
<path d="M648 508 h65 v24 h-43 v27 h43 v25 h-65 q-6 0 -6 -6 v-64 q0 -6 6 -6z" fill="#a0e7e7"/>
</g>
<g transform="translate(860,243) scale(0.19656)">
<polygon points="278,89.1 303.764,86.58 310.547,95.4 310.547,108 278,94.14" fill="#6a6765"/><polygon points="278,55.332 303.764,45 303.764,87.399 278,90.36" fill="#8d8a87"/><polygon points="310.547,72.468 335,62.199 335,96.534 310.547,108" fill="#8d8a87"/><polygon points="278,55.332 281.99,53.82 281.99,90.045 278,90.36" fill="#5f5c5a"/><polygon points="310.547,72.468 314.48,70.83 314.48,106.11 310.547,108" fill="#5f5c5a"/><line x1="305" y1="104" x2="305" y2="392" stroke="#8d8986" stroke-width="6.5"/><polygon points="490,211.9 514.86,209.62 521.405,217.6 521.405,229 490,216.46" fill="#6a6765"/><polygon points="490,181.348 514.86,172 514.86,210.361 490,213.04" fill="#8d8a87"/><polygon points="521.405,196.852 545,187.561 545,218.626 521.405,229" fill="#8d8a87"/><polygon points="490,181.348 493.85,179.98 493.85,212.755 490,213.04" fill="#5f5c5a"/><polygon points="521.405,196.852 525.2,195.37 525.2,227.29 521.405,229" fill="#5f5c5a"/><polygon points="278,405 308,388.5 550,515.5 520,532" fill="#989592"/><polygon points="278,405 520,532 520,548 278,421" fill="#5c5957"/><polygon points="278,416.52 520,543.52 520,548 278,421" fill="#9c9996"/><polygon points="520,532 550,515.5 550,521.1 524,544.8 550,531.5 520,548" fill="#6f6c6a"/><polygon points="330,425 470,380 497,400 497,455 395,508 330,470" fill="#6f6c6a"/><polygon points="345,445 470,400 480,440 390,490" fill="#9a9794"/><ellipse cx="453" cy="340" rx="38.5" ry="49.5" fill="#fff" stroke="#d2d0cd" stroke-width="15" transform="rotate(-20 453 340)"/><ellipse cx="453" cy="340" rx="44.8" ry="55.8" fill="none" stroke="#8a8784" stroke-width="2.6" transform="rotate(-20 453 340)"/><ellipse cx="453" cy="340" rx="32.2" ry="43.2" fill="none" stroke="#8a8784" stroke-width="2.2" transform="rotate(-20 453 340)"/><rect x="400" y="305" width="14" height="10" fill="#6b6967"/><rect x="500" y="362" width="14" height="10" fill="#6b6967"/><line x1="360" y1="395" x2="465" y2="335" stroke="#b0b0b0" stroke-width="2"/><ellipse cx="363" cy="387" rx="34.5" ry="47.5" fill="none" stroke="#d2d0cd" stroke-width="15" transform="rotate(-20 363 387)"/><ellipse cx="363" cy="387" rx="40.8" ry="53.8" fill="none" stroke="#8a8784" stroke-width="2.6" transform="rotate(-20 363 387)"/><ellipse cx="363" cy="387" rx="28.2" ry="41.2" fill="none" stroke="#8a8784" stroke-width="2.2" transform="rotate(-20 363 387)"/><rect x="305" y="362" width="14" height="10" fill="#6b6967"/><line x1="520" y1="226" x2="520" y2="528" stroke="#8d8986" stroke-width="6.5"/>
<path d="M694 508 h65 v24 h-43 v27 h43 v25 h-65 q-6 0 -6 -6 v-64 q0 -6 6 -6z" fill="#a0e7e7"/>
</g>
<g transform="translate(1040,243) scale(0.19656)">
<polygon points="282,84.9 305.956,82.62 312.263,90.6 312.263,102 282,89.46" fill="#6a6765"/><polygon points="282,54.348 305.956,45 305.956,83.361 282,86.04" fill="#8d8a87"/><polygon points="312.263,69.852 335,60.561 335,91.626 312.263,102" fill="#8d8a87"/><polygon points="282,54.348 285.71,52.98 285.71,85.755 282,86.04" fill="#5f5c5a"/><polygon points="312.263,69.852 315.92,68.37 315.92,100.29 312.263,102" fill="#5f5c5a"/><line x1="308" y1="98" x2="308" y2="300" stroke="#8d8986" stroke-width="6.5"/><polygon points="483,201.4 504.696,199.32 510.408,206.6 510.408,217 483,205.56" fill="#6a6765"/><polygon points="483,173.528 504.696,165 504.696,199.996 483,202.44" fill="#8d8a87"/><polygon points="510.408,187.672 531,179.196 531,207.536 510.408,217" fill="#8d8a87"/><polygon points="483,173.528 486.36,172.28 486.36,202.18 483,202.44" fill="#5f5c5a"/><polygon points="510.408,187.672 513.72,186.32 513.72,215.44 510.408,217" fill="#5f5c5a"/><polygon points="282,410 314,392.4 537,522.4 505,540" fill="#989592"/><polygon points="282,410 505,540 505,556 282,426" fill="#5c5957"/><polygon points="282,421.52 505,551.52 505,556 282,426" fill="#9c9996"/><polygon points="505,540 537,522.4 537,528 509,552.8 537,538.4 505,556" fill="#6f6c6a"/><polygon points="320,440 465,400 492,420 492,470 390,510 320,480" fill="#6f6c6a"/><polygon points="335,460 470,415 480,455 385,495" fill="#9a9794"/><ellipse cx="447" cy="312" rx="67" ry="87" fill="#fff" stroke="url(#gDark)" stroke-width="22" transform="rotate(-22 447 312)"/><ellipse cx="447" cy="312" rx="75.5" ry="95.5" fill="none" stroke="#4a4846" stroke-width="5" transform="rotate(-22 447 312)"/><line x1="355" y1="370" x2="460" y2="315" stroke="#b0b0b0" stroke-width="2"/><ellipse cx="361" cy="362" rx="67" ry="85" fill="none" stroke="url(#gDark)" stroke-width="22" transform="rotate(-22 361 362)"/><ellipse cx="361" cy="362" rx="75.5" ry="93.5" fill="none" stroke="#4a4846" stroke-width="5" transform="rotate(-22 361 362)"/><line x1="510" y1="213" x2="510" y2="528" stroke="#8d8986" stroke-width="6.5"/>
<path d="M689 508 h65 v24 h-43 v27 h43 v25 h-65 q-6 0 -6 -6 v-64 q0 -6 6 -6z" fill="#a0e7e7"/>
</g>
<g transform="translate(330,398) scale(0.19656)">
<polygon points="232,78.6 254.6,76.28 260.55,84.4 260.55,96 232,83.24" fill="#6a6765"/><polygon points="232,47.512 254.6,38 254.6,77.034 232,79.76" fill="#8d8a87"/><polygon points="260.55,63.288 282,53.834 282,85.444 260.55,96" fill="#8d8a87"/><polygon points="232,47.512 235.5,46.12 235.5,79.47 232,79.76" fill="#5f5c5a"/><polygon points="260.55,63.288 264,61.78 264,94.26 260.55,96" fill="#5f5c5a"/><line x1="258" y1="92" x2="258" y2="395" stroke="#8d8986" stroke-width="6.5"/><polygon points="470,217.2 492.6,214.96 498.55,222.8 498.55,234 470,221.68" fill="#6a6765"/><polygon points="470,187.184 492.6,178 492.6,215.688 470,218.32" fill="#8d8a87"/><polygon points="498.55,202.416 520,193.288 520,223.808 498.55,234" fill="#8d8a87"/><polygon points="470,187.184 473.5,185.84 473.5,218.04 470,218.32" fill="#5f5c5a"/><polygon points="498.55,202.416 502,200.96 502,232.32 498.55,234" fill="#5f5c5a"/><polygon points="232,404 256,390.8 519,534.8 495,548" fill="#989592"/><polygon points="232,404 495,548 495,563 232,419" fill="#5c5957"/><polygon points="232,414.8 495,558.8 495,563 232,419" fill="#9c9996"/><polygon points="495,548 519,534.8 519,540.05 499,560 519,549.8 495,563" fill="#6f6c6a"/><polygon points="323,466 411,441 432,448 361,488" fill="#b3b0ad"/><polygon points="344,426 381,411 414,406 414,447 361,471 344,462" fill="#a29f9c"/><polygon points="344,426 361,434 361,471 344,462" fill="#8a8784"/><ellipse cx="407" cy="370" rx="19.5" ry="27.5" fill="#fff" stroke="#a29f9c" stroke-width="9" transform="rotate(-20 407 370)"/><ellipse cx="407" cy="370" rx="22.8" ry="30.8" fill="none" stroke="#6a6765" stroke-width="2.6" transform="rotate(-20 407 370)"/><ellipse cx="407" cy="370" rx="16.2" ry="24.2" fill="none" stroke="#6a6765" stroke-width="2.2" transform="rotate(-20 407 370)"/><rect x="374" y="349" width="14" height="9" fill="#55524f"/><rect x="432" y="384" width="14" height="9" fill="#55524f"/><line x1="350" y1="402" x2="407" y2="370" stroke="#b0b0b0" stroke-width="2"/><ellipse cx="347" cy="404" rx="15.5" ry="25.5" fill="none" stroke="#a29f9c" stroke-width="9" transform="rotate(-20 347 404)"/><ellipse cx="347" cy="404" rx="18.8" ry="28.8" fill="none" stroke="#6a6765" stroke-width="2.6" transform="rotate(-20 347 404)"/><ellipse cx="347" cy="404" rx="12.2" ry="22.2" fill="none" stroke="#6a6765" stroke-width="2.2" transform="rotate(-20 347 404)"/><rect x="312" y="385" width="14" height="9" fill="#55524f"/><rect x="369" y="416" width="14" height="9" fill="#55524f"/><line x1="498" y1="232" x2="498" y2="532" stroke="#8d8986" stroke-width="6.5"/>
<path d="M658 508 h65 v24 h-43 v27 h43 v25 h-65 q-6 0 -6 -6 v-64 q0 -6 6 -6z" fill="#a0e7e7"/>
</g>
<g transform="translate(510,398) scale(0.19656)">
<polygon points="235,88.6 259.86,86.28 266.405,94.4 266.405,106 235,93.24" fill="#6a6765"/><polygon points="235,57.512 259.86,48 259.86,87.034 235,89.76" fill="#8d8a87"/><polygon points="266.405,73.288 290,63.834 290,95.444 266.405,106" fill="#8d8a87"/><polygon points="235,57.512 238.85,56.12 238.85,89.47 235,89.76" fill="#5f5c5a"/><polygon points="266.405,73.288 270.2,71.78 270.2,104.26 266.405,106" fill="#5f5c5a"/><line x1="263" y1="102" x2="263" y2="398" stroke="#8d8986" stroke-width="6.5"/><polygon points="452,214.2 476.86,211.96 483.405,219.8 483.405,231 452,218.68" fill="#6a6765"/><polygon points="452,184.184 476.86,175 476.86,212.688 452,215.32" fill="#8d8a87"/><polygon points="483.405,199.416 507,190.288 507,220.808 483.405,231" fill="#8d8a87"/><polygon points="452,184.184 455.85,182.84 455.85,215.04 452,215.32" fill="#5f5c5a"/><polygon points="483.405,199.416 487.2,197.96 487.2,229.32 483.405,231" fill="#5f5c5a"/><polygon points="235,408 271,388.2 511,515.2 475,535" fill="#989592"/><polygon points="235,408 475,535 475,551 235,424" fill="#5c5957"/><polygon points="235,419.52 475,546.52 475,551 235,424" fill="#9c9996"/><polygon points="475,535 511,515.2 511,520.8 479,547.8 511,531.2 475,551" fill="#6f6c6a"/><polygon points="295,430 430,385 452,400 452,445 340,492 295,470" fill="#64615f"/><polygon points="315,445 435,405 440,440 345,480" fill="#8c8986"/><ellipse cx="420" cy="345" rx="27.5" ry="35.5" fill="#fff" stroke="#d2d0cd" stroke-width="13" transform="rotate(-20 420 345)"/><ellipse cx="420" cy="345" rx="32.8" ry="40.8" fill="none" stroke="#8a8784" stroke-width="2.6" transform="rotate(-20 420 345)"/><ellipse cx="420" cy="345" rx="22.2" ry="30.2" fill="none" stroke="#8a8784" stroke-width="2.2" transform="rotate(-20 420 345)"/><rect x="378" y="318" width="14" height="10" fill="#6b6967"/><rect x="448" y="358" width="14" height="10" fill="#6b6967"/><line x1="330" y1="395" x2="425" y2="345" stroke="#b0b0b0" stroke-width="2"/><ellipse cx="326" cy="395" rx="24.5" ry="33.5" fill="none" stroke="#d2d0cd" stroke-width="13" transform="rotate(-20 326 395)"/><ellipse cx="326" cy="395" rx="29.8" ry="38.8" fill="none" stroke="#8a8784" stroke-width="2.6" transform="rotate(-20 326 395)"/><ellipse cx="326" cy="395" rx="19.2" ry="28.2" fill="none" stroke="#8a8784" stroke-width="2.2" transform="rotate(-20 326 395)"/><rect x="282" y="378" width="14" height="10" fill="#6b6967"/><line x1="480" y1="228" x2="480" y2="522" stroke="#8d8986" stroke-width="6.5"/>
<path d="M654 508 h65 v24 h-43 v27 h43 v25 h-65 q-6 0 -6 -6 v-64 q0 -6 6 -6z" fill="#a0e7e7"/>
</g>
<g transform="translate(690,398) scale(0.19656)">
<polygon points="245,85.8 268.956,83.64 275.263,91.2 275.263,102 245,90.12" fill="#6a6765"/><polygon points="245,56.856 268.956,48 268.956,84.342 245,86.88" fill="#8d8a87"/><polygon points="275.263,71.544 298,62.742 298,92.172 275.263,102" fill="#8d8a87"/><polygon points="245,56.856 248.71,55.56 248.71,86.61 245,86.88" fill="#5f5c5a"/><polygon points="275.263,71.544 278.92,70.14 278.92,100.38 275.263,102" fill="#5f5c5a"/><line x1="270" y1="98" x2="270" y2="300" stroke="#8d8986" stroke-width="6.5"/><polygon points="438,200 461.504,198 467.692,205 467.692,215 438,204" fill="#6a6765"/><polygon points="438,173.2 461.504,165 461.504,198.65 438,201" fill="#8d8a87"/><polygon points="467.692,186.8 490,178.65 490,205.9 467.692,215" fill="#8d8a87"/><polygon points="438,173.2 441.64,172 441.64,200.75 438,201" fill="#5f5c5a"/><polygon points="467.692,186.8 471.28,185.5 471.28,213.5 467.692,215" fill="#5f5c5a"/><polygon points="245,415 277,397.4 492,517.4 460,535" fill="#989592"/><polygon points="245,415 460,535 460,551 245,431" fill="#5c5957"/><polygon points="245,426.52 460,546.52 460,551 245,431" fill="#9c9996"/><polygon points="460,535 492,517.4 492,523 464,547.8 492,533.4 460,551" fill="#6f6c6a"/><polygon points="287,414 367,460 447,431 447,466 350,517 287,483" fill="#5f5c5a"/><polygon points="367,460 447,431 447,466 367,500" fill="#8c8986"/><polygon points="300,470 345,492 345,512 300,490" fill="#7b7876"/><polygon points="228,305 262,290 290,305 255,322" fill="#b0aeab"/><polygon points="445,350 480,335 505,350 470,368" fill="#b0aeab"/><polygon points="370,400 420,380 440,392 392,414" fill="#a5a29f"/><path d="M342 304 a66 84 0 1 0 132 0 a66 84 0 1 0 -132 0Z M362 308 a42 62 0 1 0 84 0 a42 62 0 1 0 -84 0Z" fill="#b3b1ae" fill-rule="evenodd" stroke="#8a8784" stroke-width="2" transform="rotate(-22 408 304)"/><line x1="312" y1="365" x2="420" y2="308" stroke="#b0b0b0" stroke-width="2"/><path d="M258 346 a68 87 0 1 0 136 0 a68 87 0 1 0 -136 0Z M282 353 a49 72 0 1 0 98 0 a49 72 0 1 0 -98 0Z" fill="#c6c4c1" fill-rule="evenodd" stroke="#8a8784" stroke-width="2" transform="rotate(-22 326 346)"/><line x1="463" y1="212" x2="463" y2="530" stroke="#8d8986" stroke-width="6.5"/>
<path d="M648 508 h65 v24 h-43 v27 h43 v25 h-65 q-6 0 -6 -6 v-64 q0 -6 6 -6z" fill="#a0e7e7"/>
</g>
<g transform="translate(860,398) scale(0.19656)">
<polygon points="385,81.4 409.86,78.92 416.405,87.6 416.405,100 385,86.36" fill="#6a6765"/><polygon points="385,48.168 409.86,38 409.86,79.726 385,82.64" fill="#8d8a87"/><polygon points="416.405,65.032 440,54.926 440,88.716 416.405,100" fill="#8d8a87"/><polygon points="385,48.168 388.85,46.68 388.85,82.33 385,82.64" fill="#5f5c5a"/><polygon points="416.405,65.032 420.2,63.42 420.2,98.14 416.405,100" fill="#5f5c5a"/><line x1="410" y1="98" x2="410" y2="275" stroke="#8a8683" stroke-width="6.5"/><rect x="403" y="262" width="13" height="40" fill="#5a5856"/><rect x="372" y="310" width="76" height="96" fill="#e9e8e7"/><line x1="377" y1="310" x2="377" y2="405" stroke="#6a6765" stroke-width="4"/><line x1="390" y1="310" x2="390" y2="405" stroke="#6a6765" stroke-width="4"/><line x1="403" y1="310" x2="403" y2="405" stroke="#6a6765" stroke-width="4"/><line x1="416" y1="310" x2="416" y2="405" stroke="#6a6765" stroke-width="4"/><line x1="429" y1="310" x2="429" y2="405" stroke="#6a6765" stroke-width="4"/><line x1="442" y1="310" x2="442" y2="405" stroke="#6a6765" stroke-width="4"/><ellipse cx="410" cy="326" rx="33" ry="8" fill="none" stroke="#7e7b78" stroke-width="3"/><ellipse cx="410" cy="344" rx="33" ry="8" fill="none" stroke="#7e7b78" stroke-width="3"/><ellipse cx="410" cy="362" rx="33" ry="8" fill="none" stroke="#7e7b78" stroke-width="3"/><ellipse cx="410" cy="380" rx="33" ry="8" fill="none" stroke="#7e7b78" stroke-width="3"/><ellipse cx="410" cy="398" rx="33" ry="8" fill="none" stroke="#7e7b78" stroke-width="3"/><ellipse cx="410" cy="308" rx="40" ry="15" fill="#a9a6a3" stroke="#5f5c5a" stroke-width="4"/><ellipse cx="410" cy="408" rx="40" ry="15" fill="#a9a6a3" stroke="#5f5c5a" stroke-width="4"/><polygon points="403,440 416,440 420,500 404,500" fill="#55524f"/><ellipse cx="410" cy="520" rx="24" ry="22" fill="#6f6c6a" stroke="none" stroke-width="0"/><ellipse cx="411" cy="520" rx="19.2" ry="17.2" fill="#cfcdca" stroke="none" stroke-width="0"/><ellipse cx="412.5" cy="521" rx="16" ry="14" fill="#fff" stroke="none" stroke-width="0"/><rect x="402" y="540" width="14" height="13" fill="#4c4a48"/>
<path d="M694 508 h65 v24 h-43 v27 h43 v25 h-65 q-6 0 -6 -6 v-64 q0 -6 6 -6z" fill="#a0e7e7"/>
</g>
<g transform="translate(1040,398) scale(0.19656)">
<polygon points="368.44,92 399.406,75 418.594,86 418.594,108 406.66,108" fill="#b6b2af"/><polygon points="370,37 399.406,22 399.406,75.4 370,90.5" fill="#9e9a97"/><polygon points="418.594,59.9 448,48 448,105 418.594,119.7" fill="#928e8b"/><line x1="405" y1="105" x2="405" y2="400" stroke="#7e7b78" stroke-width="6.5"/><rect x="394" y="228" width="25" height="72" fill="#6a6765"/><rect x="402" y="235" width="9" height="58" fill="#a9a6a3"/><polygon points="399,392 413,392 418,410 418,482 394,482 394,410" fill="#7b7876"/><rect x="394" y="405" width="9" height="77" fill="#5a5856"/><ellipse cx="405" cy="512" rx="33" ry="35" fill="#8f8d8a" stroke="none" stroke-width="0"/><ellipse cx="406" cy="512" rx="27.6" ry="29.6" fill="#cfcdca" stroke="none" stroke-width="0"/><ellipse cx="409" cy="513" rx="24" ry="26" fill="#fff" stroke="none" stroke-width="0"/><rect x="393" y="541" width="25" height="22" fill="#4c4a48"/><rect x="401" y="541" width="8" height="22" fill="#8a8885"/>
<path d="M689 508 h65 v24 h-43 v27 h43 v25 h-65 q-6 0 -6 -6 v-64 q0 -6 6 -6z" fill="#a0e7e7"/>
</g>
<g transform="translate(340,553) scale(0.19656)">
<polygon points="286.46,94.1 317.029,76.59 335.971,87.92 335.971,110.58 324.19,110.58" fill="#b6b2af"/><polygon points="288,37.45 317.029,22 317.029,77.002 288,92.555" fill="#9e9a97"/><polygon points="335.971,61.037 365,48.78 365,107.49 335.971,122.631" fill="#928e8b"/><line x1="326" y1="105" x2="326" y2="355" stroke="#8a8683" stroke-width="7"/><polygon points="318,345 336,345 346,365 346,482 308,482 308,365" fill="#8c8986"/><rect x="308" y="365" width="10" height="117" fill="#6a6765"/><rect x="322" y="372" width="10" height="100" fill="#55524f"/><ellipse cx="322" cy="506" rx="36" ry="32" fill="#8f8d8a" stroke="none" stroke-width="0"/><ellipse cx="323" cy="506" rx="30.6" ry="26.6" fill="#cfcdca" stroke="none" stroke-width="0"/><ellipse cx="326" cy="507" rx="27" ry="23" fill="#fff" stroke="none" stroke-width="0"/><rect x="306" y="535" width="40" height="30" fill="#7b7876"/><rect x="319" y="540" width="13" height="25" fill="#fff"/>
<path d="M606 508 h65 v24 h-43 v27 h43 v25 h-65 q-6 0 -6 -6 v-64 q0 -6 6 -6z" fill="#a0e7e7"/>
</g>
<g transform="translate(510,553) scale(0.19656)">
<polygon points="255,112 279.86,109.6 286.405,118 286.405,130 255,116.8" fill="#c98248"/><polygon points="255,79.84 279.86,70 279.86,110.38 255,113.2" fill="#de9455"/><polygon points="286.405,96.16 310,86.38 310,119.08 286.405,130" fill="#de9455"/><polygon points="255,79.84 258.85,78.4 258.85,112.9 255,113.2" fill="#c47a40"/><polygon points="286.405,96.16 290.2,94.6 290.2,128.2 286.405,130" fill="#c47a40"/><line x1="283" y1="128" x2="283" y2="325" stroke="#d48a4c" stroke-width="6.5"/><polygon points="432,214 456.86,211.6 463.405,220 463.405,232 432,218.8" fill="#c98248"/><polygon points="432,181.84 456.86,172 456.86,212.38 432,215.2" fill="#de9455"/><polygon points="463.405,198.16 487,188.38 487,221.08 463.405,232" fill="#de9455"/><polygon points="432,181.84 435.85,180.4 435.85,214.9 432,215.2" fill="#c47a40"/><polygon points="463.405,198.16 467.2,196.6 467.2,230.2 463.405,232" fill="#c47a40"/><polygon points="268,322 292,314 470,424 472,446 402,482 345,472 312,405 268,340" fill="#8a5028"/><polygon points="292,318 466,428 420,448 330,365" fill="#96592d"/><rect x="344" y="384" width="64" height="72" fill="#fff"/><ellipse cx="372" cy="456" rx="32" ry="17" fill="#fff" stroke="#c47a40" stroke-width="6"/><ellipse cx="376" cy="384" rx="32" ry="17" fill="#fff" stroke="#c47a40" stroke-width="6"/><ellipse cx="374" cy="420" rx="32" ry="15" fill="none" stroke="#c47a40" stroke-width="4"/><rect x="341" y="384" width="6" height="72" fill="#c47a40"/><rect x="403" y="384" width="6" height="72" fill="#c47a40"/><line x1="460" y1="230" x2="460" y2="432" stroke="#d48a4c" stroke-width="6.5"/><rect x="452" y="420" width="16" height="22" fill="#c47a40"/><rect x="274" y="312" width="16" height="22" fill="#c47a40"/>
<path d="M654 508 h65 v24 h-43 v27 h43 v25 h-65 q-6 0 -6 -6 v-64 q0 -6 6 -6z" fill="#a0e7e7"/>
</g>
<g transform="translate(690,553) scale(0.19656)">
<polygon points="335,101.4 364.38,98.92 372.115,107.6 372.115,120 335,106.36" fill="#6a6765"/><polygon points="335,68.168 364.38,58 364.38,99.726 335,102.64" fill="#8d8a87"/><polygon points="372.115,85.032 400,74.926 400,108.716 372.115,120" fill="#8d8a87"/><polygon points="335,68.168 339.55,66.68 339.55,102.33 335,102.64" fill="#5f5c5a"/><polygon points="372.115,85.032 376.6,83.42 376.6,118.14 372.115,120" fill="#5f5c5a"/><line x1="368" y1="115" x2="368" y2="378" stroke="#8a8683" stroke-width="7"/><rect x="359" y="370" width="18" height="32" fill="#5f5d5b"/><polygon points="360,397 380,393 433,428 427,452 335,502 300,497" fill="#8c8986"/><polygon points="360,397 366,396 310,498 300,497" fill="#6f6c6a"/><ellipse cx="424" cy="466" rx="22" ry="29" fill="#8f8d8a" stroke="none" stroke-width="0"/><ellipse cx="425" cy="466" rx="17.8" ry="24.8" fill="#cfcdca" stroke="none" stroke-width="0"/><ellipse cx="427" cy="467" rx="15" ry="22" fill="#fff" stroke="none" stroke-width="0"/><rect x="408" y="490" width="15" height="16" fill="#4c4a48"/><ellipse cx="316" cy="522" rx="30" ry="26" fill="#8f8d8a" stroke="none" stroke-width="0"/><ellipse cx="317" cy="522" rx="25.2" ry="21.2" fill="#cfcdca" stroke="none" stroke-width="0"/><ellipse cx="319" cy="523" rx="22" ry="18" fill="#fff" stroke="none" stroke-width="0"/><rect x="304" y="548" width="22" height="18" fill="#4c4a48"/>
<path d="M648 508 h65 v24 h-43 v27 h43 v25 h-65 q-6 0 -6 -6 v-64 q0 -6 6 -6z" fill="#a0e7e7"/>
</g>
<g transform="translate(860,553) scale(0.19656)">
<polygon points="248,75.6 272.86,72.88 279.405,82.4 279.405,96 248,81.04" fill="#6a6765"/><polygon points="248,39.152 272.86,28 272.86,73.764 248,76.96" fill="#8d8a87"/><polygon points="279.405,57.648 303,46.564 303,83.624 279.405,96" fill="#8d8a87"/><polygon points="248,39.152 251.85,37.52 251.85,76.62 248,76.96" fill="#5f5c5a"/><polygon points="279.405,57.648 283.2,55.88 283.2,93.96 279.405,96" fill="#5f5c5a"/><line x1="275" y1="92" x2="275" y2="378" stroke="#8d8986" stroke-width="6.5"/><polygon points="520,227 544.86,224.6 551.405,233 551.405,245 520,231.8" fill="#6a6765"/><polygon points="520,194.84 544.86,185 544.86,225.38 520,228.2" fill="#8d8a87"/><polygon points="551.405,211.16 575,201.38 575,234.08 551.405,245" fill="#8d8a87"/><polygon points="520,194.84 523.85,193.4 523.85,227.9 520,228.2" fill="#5f5c5a"/><polygon points="551.405,211.16 555.2,209.6 555.2,243.2 551.405,245" fill="#5f5c5a"/><polygon points="245,388 275,371.5 578,543.5 548,560" fill="#989592"/><polygon points="245,388 548,560 548,580 245,408" fill="#5c5957"/><polygon points="245,402.4 548,574.4 548,580 245,408" fill="#9c9996"/><polygon points="548,560 578,543.5 578,550.5 552,576 578,563.5 548,580" fill="#6f6c6a"/><polygon points="262,384 268,380 560,546 554,550" fill="#4c4a48"/><line x1="246" y1="398" x2="548" y2="570" stroke="#e6e6e6" stroke-width="3"/><polygon points="395,432 430,425 436,460 400,470" fill="#7b7876"/><rect x="398" y="414" width="30" height="12" fill="#4c4a48"/><rect x="404" y="426" width="18" height="8" fill="#c9c7c4"/><line x1="548" y1="243" x2="548" y2="540" stroke="#8d8986" stroke-width="6.5"/>
<path d="M694 508 h65 v24 h-43 v27 h43 v25 h-65 q-6 0 -6 -6 v-64 q0 -6 6 -6z" fill="#a0e7e7"/>
</g>
<g transform="translate(1040,553) scale(0.19656)">
<polygon points="272,80.5 297.312,77.9 303.976,87 303.976,100 272,85.7" fill="#6a6765"/><polygon points="272,45.66 297.312,35 297.312,78.745 272,81.8" fill="#8d8a87"/><polygon points="303.976,63.34 328,52.745 328,88.17 303.976,100" fill="#8d8a87"/><polygon points="272,45.66 275.92,44.1 275.92,81.475 272,81.8" fill="#5f5c5a"/><polygon points="303.976,63.34 307.84,61.65 307.84,98.05 303.976,100" fill="#5f5c5a"/><line x1="300" y1="96" x2="300" y2="388" stroke="#8d8986" stroke-width="6.5"/><polygon points="488,194.9 511.504,192.62 517.692,200.6 517.692,212 488,199.46" fill="#6a6765"/><polygon points="488,164.348 511.504,155 511.504,193.361 488,196.04" fill="#8d8a87"/><polygon points="517.692,179.852 540,170.561 540,201.626 517.692,212" fill="#8d8a87"/><polygon points="488,164.348 491.64,162.98 491.64,195.755 488,196.04" fill="#5f5c5a"/><polygon points="517.692,179.852 521.28,178.37 521.28,210.29 517.692,212" fill="#5f5c5a"/><polygon points="265,402 293,386.6 548,532.6 520,548" fill="#989592"/><polygon points="265,402 520,548 520,568 265,422" fill="#5c5957"/><polygon points="265,416.4 520,562.4 520,568 265,422" fill="#9c9996"/><polygon points="520,548 548,532.6 548,539.6 524,564 548,552.6 520,568" fill="#6f6c6a"/><polygon points="282,396 288,392 535,534 529,538" fill="#4c4a48"/><line x1="266" y1="412" x2="520" y2="558" stroke="#e6e6e6" stroke-width="3"/><ellipse cx="432" cy="398" rx="24.5" ry="26.5" fill="#fff" stroke="#6f6c6a" stroke-width="11" transform="rotate(-20 432 398)"/><ellipse cx="432" cy="398" rx="28.8" ry="30.8" fill="none" stroke="#4a4846" stroke-width="2.6" transform="rotate(-20 432 398)"/><ellipse cx="432" cy="398" rx="20.2" ry="22.2" fill="none" stroke="#4a4846" stroke-width="2.2" transform="rotate(-20 432 398)"/><rect x="395" y="378" width="12" height="10" fill="#4c4a48"/><rect x="458" y="412" width="14" height="10" fill="#4c4a48"/><line x1="385" y1="428" x2="440" y2="395" stroke="#b0b0b0" stroke-width="2"/><ellipse cx="378" cy="426" rx="18" ry="26" fill="none" stroke="#d2d0cd" stroke-width="10" transform="rotate(-20 378 426)"/><ellipse cx="378" cy="426" rx="21.8" ry="29.8" fill="none" stroke="#8a8784" stroke-width="2.6" transform="rotate(-20 378 426)"/><ellipse cx="378" cy="426" rx="14.2" ry="22.2" fill="none" stroke="#8a8784" stroke-width="2.2" transform="rotate(-20 378 426)"/><polygon points="350,462 440,440 455,455 385,490" fill="#b9b7b4"/><polygon points="395,445 425,438 440,470 405,480" fill="#8f8d8a"/><line x1="515" y1="210" x2="515" y2="522" stroke="#8d8986" stroke-width="6.5"/>
<path d="M689 508 h65 v24 h-43 v27 h43 v25 h-65 q-6 0 -6 -6 v-64 q0 -6 6 -6z" fill="#a0e7e7"/>
</g>
</svg>
<div class="lbl" style="left:283.4px;top:206px">PSK7340-YK1-AK1</div>
<div class="lbl" style="left:462.5px;top:206px">PSK7340-YK1-AK2</div>
<div class="lbl" style="left:641.7px;top:206px">PSK7340-YK1-AK3</div>
<div class="lbl" style="left:820.9px;top:206px">PSK7340-YK1-AK4-PSK7320-10-40</div>
<div class="lbl" style="left:1000.0px;top:206px">PSK7340-YK1-AK4-PSK7320-50-150</div>
<div class="lbl" style="left:283.4px;top:361px">PSK7340-YK1-AK4-PSK7321-200-...</div>
<div class="lbl" style="left:462.5px;top:361px">PSK7340-YK1-AK4-PSK7322-600-...</div>
<div class="lbl" style="left:641.7px;top:361px">PSK7340-YK1-AK4-PSK7323-10-150</div>
<div class="lbl" style="left:820.9px;top:361px">PSK7340-YK1-AK4-PSK7324-200-...</div>
<div class="lbl" style="left:1000.0px;top:361px">PSK7340-YK1-AK4-PSK7325-600-...</div>
<div class="lbl" style="left:283.4px;top:516px">PSK7340-YK1-AK4-PSK7326-10-150</div>
<div class="lbl" style="left:462.5px;top:516px">PSK7340-YK1-AK4-PSK7327-200-...</div>
<div class="lbl" style="left:641.7px;top:516px">PSK7340-YK1-AK4-PSK7328-600-...</div>
<div class="lbl" style="left:820.9px;top:516px">PSK7340-YK1-AK5</div>
<div class="lbl" style="left:1000.0px;top:516px">PSK7340-YK1-AK6</div>
<div class="lbl" style="left:283.4px;top:671px">PSK7340-YK1-AR1</div>
<div class="lbl" style="left:462.5px;top:671px">PSK7340-YK1-AR2</div>
<div class="lbl" style="left:641.7px;top:671px">PSK7340-YK1-AR3</div>
<div class="lbl" style="left:820.9px;top:671px">PSK7340-YK1-AR4-PSK7320-10-40</div>
<div class="lbl" style="left:1000.0px;top:671px">PSK7340-YK1-AR4-PSK7320-50-...</div>
</body></html>
